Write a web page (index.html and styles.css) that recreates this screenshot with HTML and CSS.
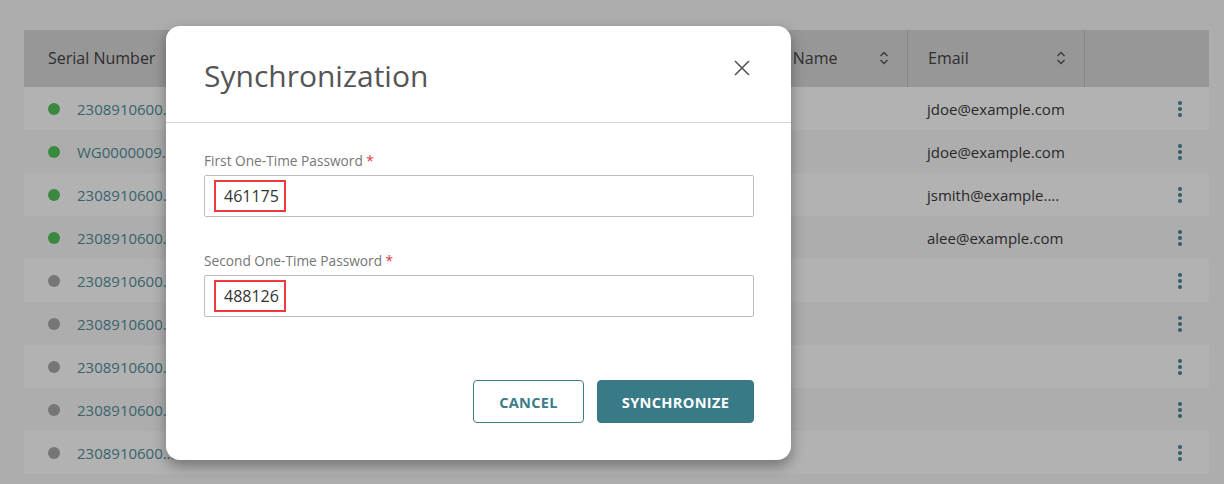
FILE: index.html
```html
<!DOCTYPE html>
<html lang="en">
<head>
<meta charset="utf-8">
<title>Synchronization</title>
<link rel="stylesheet" href="styles.css">
</head>
<body>
<div class="page">
  <div class="table">
    <div class="thead">
      <div class="th th-serial">Serial Number</div>
      <div class="th"></div>
      <div class="th"></div>
      <div class="th th-sort">Last Name<svg class="sort" viewBox="0 0 10 14"><path d="M1.5 5 L5 1.5 L8.5 5 M1.5 9 L5 12.5 L8.5 9" fill="none" stroke="currentColor" stroke-width="1.4"/></svg></div>
      <div class="th th-sort th-line">Email<svg class="sort" viewBox="0 0 10 14"><path d="M1.5 5 L5 1.5 L8.5 5 M1.5 9 L5 12.5 L8.5 9" fill="none" stroke="currentColor" stroke-width="1.4"/></svg></div>
      <div class="th th-line"></div>
    </div>
    <div class="row odd">
      <div class="td td-serial"><span class="dot on"></span><span class="serial">2308910600123</span></div>
      <div class="td"></div><div class="td"></div><div class="td"></div>
      <div class="td td-email">jdoe@example.com</div>
      <div class="td td-act"><span class="kebab"><i></i><i></i><i></i></span></div>
    </div>
    <div class="row">
      <div class="td td-serial"><span class="dot on"></span><span class="serial">WG000000987</span></div>
      <div class="td"></div><div class="td"></div><div class="td"></div>
      <div class="td td-email">jdoe@example.com</div>
      <div class="td td-act"><span class="kebab"><i></i><i></i><i></i></span></div>
    </div>
    <div class="row odd">
      <div class="td td-serial"><span class="dot on"></span><span class="serial">2308910600234</span></div>
      <div class="td"></div><div class="td"></div><div class="td"></div>
      <div class="td td-email">jsmith@example....</div>
      <div class="td td-act"><span class="kebab"><i></i><i></i><i></i></span></div>
    </div>
    <div class="row">
      <div class="td td-serial"><span class="dot on"></span><span class="serial">2308910600345</span></div>
      <div class="td"></div><div class="td"></div><div class="td"></div>
      <div class="td td-email">alee@example.com</div>
      <div class="td td-act"><span class="kebab"><i></i><i></i><i></i></span></div>
    </div>
    <div class="row odd">
      <div class="td td-serial"><span class="dot off"></span><span class="serial">2308910600456</span></div>
      <div class="td"></div><div class="td"></div><div class="td"></div>
      <div class="td td-email"></div>
      <div class="td td-act"><span class="kebab"><i></i><i></i><i></i></span></div>
    </div>
    <div class="row">
      <div class="td td-serial"><span class="dot off"></span><span class="serial">2308910600567</span></div>
      <div class="td"></div><div class="td"></div><div class="td"></div>
      <div class="td td-email"></div>
      <div class="td td-act"><span class="kebab"><i></i><i></i><i></i></span></div>
    </div>
    <div class="row odd">
      <div class="td td-serial"><span class="dot off"></span><span class="serial">2308910600678</span></div>
      <div class="td"></div><div class="td"></div><div class="td"></div>
      <div class="td td-email"></div>
      <div class="td td-act"><span class="kebab"><i></i><i></i><i></i></span></div>
    </div>
    <div class="row">
      <div class="td td-serial"><span class="dot off"></span><span class="serial">2308910600789</span></div>
      <div class="td"></div><div class="td"></div><div class="td"></div>
      <div class="td td-email"></div>
      <div class="td td-act"><span class="kebab"><i></i><i></i><i></i></span></div>
    </div>
    <div class="row odd">
      <div class="td td-serial"><span class="dot off"></span><span class="serial">2308910600890</span></div>
      <div class="td"></div><div class="td"></div><div class="td"></div>
      <div class="td td-email"></div>
      <div class="td td-act"><span class="kebab"><i></i><i></i><i></i></span></div>
    </div>
  </div>
</div>

<div class="overlay"></div>

<div class="modal" role="dialog" aria-labelledby="mtitle">
  <div class="modal-head">
    <h2 id="mtitle" class="modal-title">Synchronization</h2>
    <button class="close" aria-label="Close">
      <svg viewBox="0 0 16 16"><path d="M1 1 L15 15 M15 1 L1 15" fill="none" stroke="currentColor" stroke-width="1.6"/></svg>
    </button>
  </div>
  <div class="modal-body">
    <label class="field">
      <span class="label">First One-Time Password <span class="req">*</span></span>
      <span class="input"><span class="mark">461175</span></span>
    </label>
    <label class="field">
      <span class="label">Second One-Time Password <span class="req">*</span></span>
      <span class="input"><span class="mark">488126</span></span>
    </label>
  </div>
  <div class="modal-foot">
    <button class="btn btn-outline">CANCEL</button>
    <button class="btn btn-primary">SYNCHRONIZE</button>
  </div>
</div>
</body>
</html>
```

FILE: styles.css
```css
* { box-sizing: border-box; }

html, body {
  margin: 0;
  padding: 0;
}

body {
  width: 1224px;
  height: 484px;
  overflow: hidden;
  background: #f8f8f8;
  font-family: "Open Sans", "Noto Sans", sans-serif;
  color: #3c3c3c;
  position: relative;
}

.page {
  padding: 30px 15px 0 24px;
}

.table {
  width: 1185px;
}

.thead,
.row {
  display: grid;
  grid-template-columns: 240px 240px 234px 169px 177px 125px;
}

.thead {
  height: 57px;
  background: #d8d8d8;
}

.th {
  display: flex;
  align-items: center;
  padding: 0 20px 2px;
  font-size: 16px;
  color: #444;
  white-space: nowrap;
  overflow: hidden;
}

.th-serial { padding-left: 24px; }

.th-sort { justify-content: space-between; padding-right: 18px; }

.th-line { border-left: 1px solid #c2c2c2; }

.sort {
  width: 10px;
  height: 14px;
  color: #555;
  flex: none;
}

.row {
  height: 43px;
  background: transparent;
}

.row.odd { background: #ffffff; }

.td {
  display: flex;
  align-items: center;
  padding: 0 20px;
  font-size: 15px;
  white-space: nowrap;
  overflow: hidden;
}

.td-serial { padding-left: 24px; }

.dot {
  width: 12px;
  height: 12px;
  border-radius: 50%;
  flex: none;
  margin-right: 17px;
}

.dot.on { background: #55c45a; }
.dot.off { background: #a9a9a9; }

.serial {
  color: #53909b;
  max-width: 100px;
  overflow: hidden;
  text-overflow: ellipsis;
}

.td-email { color: #3a3a3a; }

.td-act { justify-content: flex-end; padding-right: 27px; }

.kebab {
  display: flex;
  flex-direction: column;
  gap: 2px;
}

.kebab i {
  display: block;
  width: 4px;
  height: 4px;
  border-radius: 50%;
  background: #43889a;
}

.overlay {
  position: absolute;
  inset: 0;
  background: rgba(0, 0, 0, 0.3);
}

.modal {
  position: absolute;
  left: 166px;
  top: 26px;
  width: 625px;
  height: 434px;
  background: #fff;
  border-radius: 14px;
  box-shadow: 0 6px 14px rgba(0, 0, 0, 0.35);
  display: flex;
  flex-direction: column;
}

.modal-head {
  height: 97px;
  border-bottom: 1px solid #d6d6d6;
  display: flex;
  align-items: flex-start;
  justify-content: space-between;
  padding: 30px 38px 0 38px;
}

.modal-title {
  margin: 0;
  font-size: 30px;
  font-weight: 400;
  line-height: 40px;
  color: #555;
}

.close {
  border: 0;
  background: none;
  padding: 0;
  margin: 4px 3px 0 0;
  width: 16px;
  height: 16px;
  color: #555;
  cursor: pointer;
}

.close svg { width: 16px; height: 16px; display: block; }

.modal-body {
  padding: 28px 37px 0 38px;
  display: flex;
  flex-direction: column;
  gap: 34px;
  flex: 1;
}

.field {
  display: flex;
  flex-direction: column;
}

.label {
  font-size: 13.7px;
  line-height: 20px;
  color: #767676;
  margin-bottom: 4px;
}

.req { color: #d9363e; }

.input {
  height: 42px;
  border: 1px solid #bdbdbd;
  border-radius: 2px;
  display: flex;
  align-items: center;
  padding-left: 9px;
}

.mark {
  display: inline-block;
  border: 2px solid #ef3b3b;
  padding: 3px 5px 2px 8px;
  font-size: 16px;
  line-height: 23px;
  color: #333;
}

.modal-foot {
  display: flex;
  justify-content: flex-end;
  gap: 13px;
  padding: 0 37px 37px 0;
}

.btn {
  height: 43px;
  border-radius: 4px;
  font-family: "Open Sans", "Noto Sans", sans-serif;
  font-size: 14.6px;
  font-weight: 700;
  letter-spacing: 0.3px;
  cursor: pointer;
}

.btn-outline {
  width: 111px;
  background: #fff;
  border: 1px solid #3b7d88;
  color: #3b7d88;
}

.btn-primary {
  width: 157px;
  background: #387a85;
  border: 1px solid #387a85;
  color: #fff;
}
```
